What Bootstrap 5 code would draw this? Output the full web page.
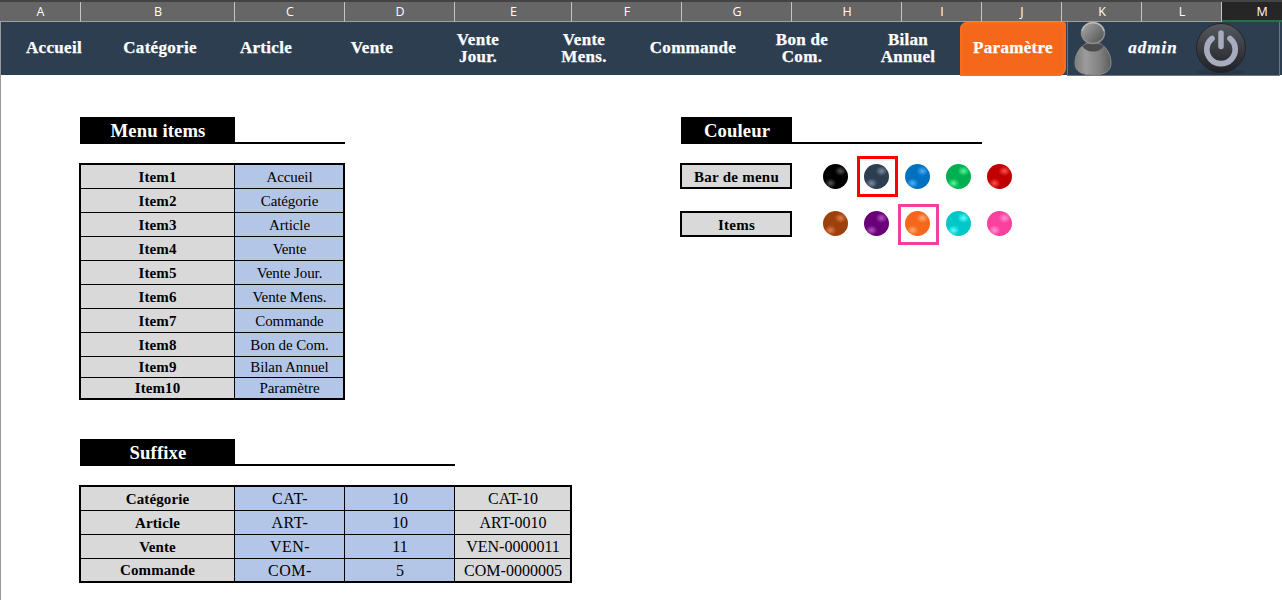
<!DOCTYPE html>
<html lang="fr">
<head>
<meta charset="utf-8">
<meta name="viewport" content="width=device-width, initial-scale=1">
<title>Paramètre</title>
<link rel="stylesheet" href="https://cdn.jsdelivr.net/npm/bootstrap@5.3.0/dist/css/bootstrap.min.css">
<script src="https://cdn.jsdelivr.net/npm/bootstrap@5.3.0/dist/js/bootstrap.bundle.min.js"></script>
<style>
body{font-family:"Liberation Serif",serif;color:#000;height:600px;line-height:1}
.sheet{height:600px;border-left:1px solid #999}
.colheads{height:22px;margin-left:-1px;border-top:2px solid #444;background:#666;font:12.5px "Open Sans",sans-serif;color:#fff;
  display:grid;grid-template-columns:81px 154px 110px 110px 117px 110px 110px 110px 80px 80px 80px 80px 80px}
.colheads>div{height:20px;line-height:19px;padding-left:1px;text-align:center;border-right:1px solid #c4c4c4;border-bottom:1px solid #a0a0a0}
.colheads>.current{background:#262626;border-bottom:2px solid #217346}
.menubar{height:53px;background:#2d3e50;color:#fff}
.menubar .nav-link{width:106px;height:53px;padding:0 0 2px 0;font-size:17px;line-height:17px;font-weight:700;letter-spacing:.3px;color:#fff;-webkit-text-stroke:.25px #fff}
.menubar .nav-link.wide{width:112px}
.menubar .nav-link.active{height:54px;margin-left:-1px;padding-bottom:3px;background:#f5671a;border-radius:7px 3px 8px 0;box-shadow:inset 0 0 3px 2px #fb6e20}
.userbox{width:213px;height:54px;margin-left:1px;border:1px solid #70777f;border-top:0}
.login{width:50px;margin-left:12px;padding-bottom:2px;font-size:17px;letter-spacing:1px;font-weight:700;font-style:italic;-webkit-text-stroke:.25px #fff}
.heading{height:27px;border-bottom:2px solid #000}
.heading h2{background:#000;color:#fff;font-size:18.700px;font-weight:700;line-height:28px;height:27px;letter-spacing:.1px;padding-left:1px}
.work{padding:42px 0 0 79px}
.left{width:601px}
.cells{display:grid;gap:1px;background:#000;border:2px solid #000;margin:19px 0 0 -1px;font-size:16px;text-align:center}
.cells>div{background:#b4c6e7;overflow:hidden;white-space:nowrap;display:flex;align-items:center;justify-content:center;padding:1px 0 0 1px}
.cells>.g{background:#d9d9d9}
.cells>.fw-bold{font-size:15px;letter-spacing:.1px;padding-left:0}
.two{grid-template-columns:153px 108px;grid-template-rows:23px repeat(7,23px) 20px 20px;width:266px;font-size:15px}
.two>:not(.g){letter-spacing:-.1px}
.four{grid-template-columns:153px 109px 109px 115px;grid-template-rows:repeat(3,23px) 22px;width:493px}
.four>.code{letter-spacing:.5px}
.second{margin-top:39px}
.w-a{width:155px}
.taglabel{width:112px;height:26px;border:2px solid #000;background:#d9d9d9;font-size:15px;letter-spacing:.25px;font-weight:700;line-height:24px;text-align:center;padding-left:1px}
.choices{margin-left:-1px}
.swatches{margin-left:24px}
.pick{width:41px;height:41px}
.ball{width:25px;height:25px;border-radius:50%;position:relative;left:-1px;
  background:radial-gradient(ellipse 6px 5px at 70% 28%,var(--l),transparent),radial-gradient(ellipse 6px 5px at 30% 77%,var(--l),transparent),var(--c)}
.pick.on{border:3px solid var(--b)}
</style>
</head>
<body class="bg-white overflow-hidden">
<div class="sheet">
  <div class="colheads overflow-hidden"><div>A</div><div>B</div><div>C</div><div>D</div><div>E</div><div>F</div><div>G</div><div>H</div><div>I</div><div>J</div><div>K</div><div>L</div><div class="current">M</div></div>
  <nav class="menubar nav flex-nowrap text-center">
    <a class="nav-link d-flex align-items-center justify-content-center">Accueil</a>
    <a class="nav-link d-flex align-items-center justify-content-center">Catégorie</a>
    <a class="nav-link d-flex align-items-center justify-content-center">Article</a>
    <a class="nav-link d-flex align-items-center justify-content-center">Vente</a>
    <a class="nav-link d-flex align-items-center justify-content-center">Vente<br>Jour.</a>
    <a class="nav-link d-flex align-items-center justify-content-center">Vente<br>Mens.</a>
    <a class="nav-link wide d-flex align-items-center justify-content-center">Commande</a>
    <a class="nav-link d-flex align-items-center justify-content-center">Bon de<br>Com.</a>
    <a class="nav-link d-flex align-items-center justify-content-center">Bilan<br>Annuel</a>
    <a class="nav-link active d-flex align-items-center justify-content-center">Paramètre</a>
    <div class="userbox d-flex align-items-center flex-shrink-0">
      <svg class="ms-1 flex-shrink-0" width="44" height="54" viewBox="0 0 44 54">
        <defs>
          <linearGradient id="torso" x1="0" x2="1"><stop offset="0" stop-color="#7c7c7c"/><stop offset=".3" stop-color="#9c9c9c"/><stop offset=".7" stop-color="#808080"/><stop offset="1" stop-color="#5c5c5c"/></linearGradient>
          <linearGradient id="face" x1="0" y1="0" x2="1" y2=".8"><stop offset="0" stop-color="#ababab"/><stop offset=".6" stop-color="#777"/><stop offset="1" stop-color="#585858"/></linearGradient>
          <linearGradient id="disc" x1="0" y1="0" x2="0" y2="1"><stop offset="0" stop-color="#55585f"/><stop offset=".55" stop-color="#383a40"/><stop offset="1" stop-color="#202126"/></linearGradient>
        </defs>
        <path d="M21 20C10 20 3 31 3 41c0 8 6 12 18 12s18-4 18-12c0-10-7-21-18-21z" fill="url(#torso)" stroke="#8a8a8a"/>
        <path d="M10.500 23.500Q21 18 31.500 23.500C29 31.500 13 31.500 10.500 23.500z" fill="#4c4c4c"/>
        <ellipse cx="21" cy="11" rx="11.500" ry="10.500" fill="url(#face)" stroke="#8c8c8c" stroke-width="1.500"/>
        <path d="M10 9C13-2 29-2 32 9" fill="none" stroke="#bcbcbc" stroke-width="1.500"/>
      </svg>
      <span class="login flex-shrink-0">admin</span>
      <svg class="flex-shrink-0" style="margin-left:17px" width="52" height="54" viewBox="0 0 52 54">
        <ellipse cx="26" cy="50" rx="24" ry="3" fill="#202a38" opacity=".4"/>
        <circle cx="26" cy="26" r="24.500" fill="url(#disc)" stroke="#24252b"/>
        <path d="M17 16.500a14.200 14.200 0 1 0 18 0" fill="none" stroke="#a6abbd" stroke-width="5.700" stroke-linecap="round"/>
        <path d="M26 11v13.500" stroke="#a6abbd" stroke-width="5.500" stroke-linecap="round"/>
      </svg>
    </div>
  </nav>
  <main class="work d-flex">
    <div class="left flex-shrink-0">
      <section>
        <div class="heading" style="width:265px"><h2 class="w-a text-center m-0">Menu items</h2></div>
        <div class="cells two">
          <div class="g fw-bold">Item1</div><div>Accueil</div>
          <div class="g fw-bold">Item2</div><div>Catégorie</div>
          <div class="g fw-bold">Item3</div><div>Article</div>
          <div class="g fw-bold">Item4</div><div>Vente</div>
          <div class="g fw-bold">Item5</div><div>Vente Jour.</div>
          <div class="g fw-bold">Item6</div><div>Vente Mens.</div>
          <div class="g fw-bold">Item7</div><div>Commande</div>
          <div class="g fw-bold">Item8</div><div>Bon de Com.</div>
          <div class="g fw-bold">Item9</div><div>Bilan Annuel</div>
          <div class="g fw-bold">Item10</div><div>Paramètre</div>
        </div>
      </section>
      <section class="second">
        <div class="heading" style="width:375px"><h2 class="w-a text-center m-0">Suffixe</h2></div>
        <div class="cells four">
          <div class="g fw-bold">Catégorie</div><div class="code">CAT-</div><div>10</div><div class="g">CAT-10</div>
          <div class="g fw-bold">Article</div><div class="code">ART-</div><div>10</div><div class="g">ART-0010</div>
          <div class="g fw-bold">Vente</div><div class="code">VEN-</div><div>11</div><div class="g">VEN-0000011</div>
          <div class="g fw-bold">Commande</div><div class="code">COM-</div><div>5</div><div class="g">COM-0000005</div>
        </div>
      </section>
    </div>
    <section>
      <div class="heading" style="width:301px"><h2 style="width:111px" class="text-center m-0">Couleur</h2></div>
      <div class="choices d-flex align-items-start" style="margin-top:12px">
        <div class="taglabel" style="margin-top:7px">Bar de menu</div>
        <div class="swatches d-flex">
          <div class="pick d-flex align-items-center justify-content-center"><div class="ball" style="--c:#000;--l:#555"></div></div>
          <div class="pick on d-flex align-items-center justify-content-center" style="--b:#f00"><div class="ball" style="--c:#2d3e50;--l:#7a8da3"></div></div>
          <div class="pick d-flex align-items-center justify-content-center"><div class="ball" style="--c:#0070c0;--l:#4db0ff"></div></div>
          <div class="pick d-flex align-items-center justify-content-center"><div class="ball" style="--c:#00b050;--l:#55f59a"></div></div>
          <div class="pick d-flex align-items-center justify-content-center"><div class="ball" style="--c:#c00000;--l:#ff5050"></div></div>
        </div>
      </div>
      <div class="choices d-flex align-items-start" style="margin-top:7px">
        <div class="taglabel" style="margin-top:7px">Items</div>
        <div class="swatches d-flex">
          <div class="pick d-flex align-items-center justify-content-center"><div class="ball" style="--c:#9e3f0e;--l:#e08048;top:-1px"></div></div>
          <div class="pick d-flex align-items-center justify-content-center"><div class="ball" style="--c:#6a0078;--l:#b555c5;top:-1px"></div></div>
          <div class="pick on d-flex align-items-center justify-content-center" style="--b:#f43fa0"><div class="ball" style="--c:#f5671a;--l:#ffab70;top:-1px"></div></div>
          <div class="pick d-flex align-items-center justify-content-center"><div class="ball" style="--c:#00c8c8;--l:#5fffff;top:-1px"></div></div>
          <div class="pick d-flex align-items-center justify-content-center"><div class="ball" style="--c:#fa41a0;--l:#ff94d8;top:-1px"></div></div>
        </div>
      </div>
    </section>
  </main>
</div>
</body>
</html>
